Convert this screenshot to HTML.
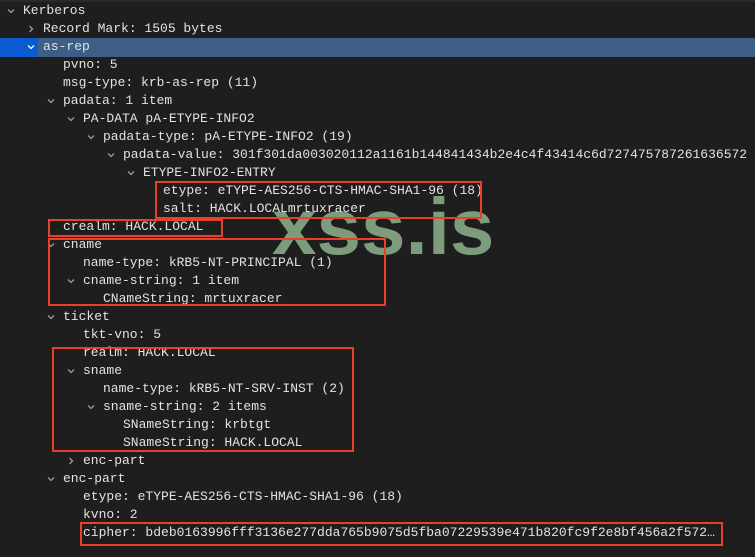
<!DOCTYPE html>
<html><head><meta charset="utf-8"><style>
html,body{margin:0;padding:0;}
body{width:755px;height:557px;background:#1e1e1e;overflow:hidden;position:relative;font-family:"Liberation Mono",monospace;font-size:13px;color:#e2e2e2;}
.r{position:absolute;left:0;height:18px;line-height:18px;white-space:pre;}
.a{position:absolute;width:10px;height:10px;}
.sel{position:absolute;left:0;top:38px;width:755px;height:19px;background:#3d5f87;}
.sel2{position:absolute;left:0;top:38px;width:38px;height:19px;background:#0a5bd0;}
.box{position:absolute;border:2px solid #e8402a;box-sizing:border-box;}
.wm{position:absolute;left:272px;top:187px;font-family:"Liberation Sans",sans-serif;font-weight:bold;font-size:80px;color:#7c9c7c;line-height:80px;}
.top{position:absolute;left:0;top:0;width:755px;height:2px;background:#2a2a2a;}
</style></head><body>
<svg width="0" height="0" style="position:absolute"><defs>
<symbol id="d" viewBox="0 0 10 10"><path d="M2 3.5 L5 6.5 L8 3.5" fill="none" stroke="#9a9a9a" stroke-width="1.3"/></symbol>
<symbol id="dw" viewBox="0 0 10 10"><path d="M2 3.5 L5 6.5 L8 3.5" fill="none" stroke="#ffffff" stroke-width="1.3"/></symbol>
<symbol id="rt" viewBox="0 0 10 10"><path d="M3.5 2 L6.5 5 L3.5 8" fill="none" stroke="#9a9a9a" stroke-width="1.3"/></symbol>
</defs></svg>
<div class="top"></div>
<div class="sel"></div><div class="sel2"></div>
<div class="wm">xss.is</div>
<div class="r" style="top:2px;left:23px">Kerberos</div><svg class="a" style="left:6px;top:6px"><use href="#d"/></svg>
<div class="r" style="top:20px;left:43px">Record Mark: 1505 bytes</div><svg class="a" style="left:26px;top:24px"><use href="#rt"/></svg>
<div class="r" style="top:38px;left:43px">as-rep</div><svg class="a" style="left:26px;top:42px"><use href="#dw"/></svg>
<div class="r" style="top:56px;left:63px">pvno: 5</div>
<div class="r" style="top:74px;left:63px">msg-type: krb-as-rep (11)</div>
<div class="r" style="top:92px;left:63px">padata: 1 item</div><svg class="a" style="left:46px;top:96px"><use href="#d"/></svg>
<div class="r" style="top:110px;left:83px">PA-DATA pA-ETYPE-INFO2</div><svg class="a" style="left:66px;top:114px"><use href="#d"/></svg>
<div class="r" style="top:128px;left:103px">padata-type: pA-ETYPE-INFO2 (19)</div><svg class="a" style="left:86px;top:132px"><use href="#d"/></svg>
<div class="r" style="top:146px;left:123px">padata-value: 301f301da003020112a1161b144841434b2e4c4f43414c6d727475787261636572</div><svg class="a" style="left:106px;top:150px"><use href="#d"/></svg>
<div class="r" style="top:164px;left:143px">ETYPE-INFO2-ENTRY</div><svg class="a" style="left:126px;top:168px"><use href="#d"/></svg>
<div class="r" style="top:182px;left:163px">etype: eTYPE-AES256-CTS-HMAC-SHA1-96 (18)</div>
<div class="r" style="top:200px;left:163px">salt: HACK.LOCALmrtuxracer</div>
<div class="r" style="top:218px;left:63px">crealm: HACK.LOCAL</div>
<div class="r" style="top:236px;left:63px">cname</div><svg class="a" style="left:46px;top:240px"><use href="#d"/></svg>
<div class="r" style="top:254px;left:83px">name-type: kRB5-NT-PRINCIPAL (1)</div>
<div class="r" style="top:272px;left:83px">cname-string: 1 item</div><svg class="a" style="left:66px;top:276px"><use href="#d"/></svg>
<div class="r" style="top:290px;left:103px">CNameString: mrtuxracer</div>
<div class="r" style="top:308px;left:63px">ticket</div><svg class="a" style="left:46px;top:312px"><use href="#d"/></svg>
<div class="r" style="top:326px;left:83px">tkt-vno: 5</div>
<div class="r" style="top:344px;left:83px">realm: HACK.LOCAL</div>
<div class="r" style="top:362px;left:83px">sname</div><svg class="a" style="left:66px;top:366px"><use href="#d"/></svg>
<div class="r" style="top:380px;left:103px">name-type: kRB5-NT-SRV-INST (2)</div>
<div class="r" style="top:398px;left:103px">sname-string: 2 items</div><svg class="a" style="left:86px;top:402px"><use href="#d"/></svg>
<div class="r" style="top:416px;left:123px">SNameString: krbtgt</div>
<div class="r" style="top:434px;left:123px">SNameString: HACK.LOCAL</div>
<div class="r" style="top:452px;left:83px">enc-part</div><svg class="a" style="left:66px;top:456px"><use href="#rt"/></svg>
<div class="r" style="top:470px;left:63px">enc-part</div><svg class="a" style="left:46px;top:474px"><use href="#d"/></svg>
<div class="r" style="top:488px;left:83px">etype: eTYPE-AES256-CTS-HMAC-SHA1-96 (18)</div>
<div class="r" style="top:506px;left:83px">kvno: 2</div>
<div class="r" style="top:524px;left:83px">cipher: bdeb0163996fff3136e277dda765b9075d5fba07229539e471b820fc9f2e8bf456a2f572…</div>
<div class="box" style="left:155px;top:181px;width:327px;height:38px"></div>
<div class="box" style="left:48px;top:219px;width:175px;height:18px"></div>
<div class="box" style="left:48px;top:238px;width:338px;height:68px"></div>
<div class="box" style="left:52px;top:347px;width:302px;height:105px"></div>
<div class="box" style="left:80px;top:522px;width:643px;height:24px"></div>
</body></html>
